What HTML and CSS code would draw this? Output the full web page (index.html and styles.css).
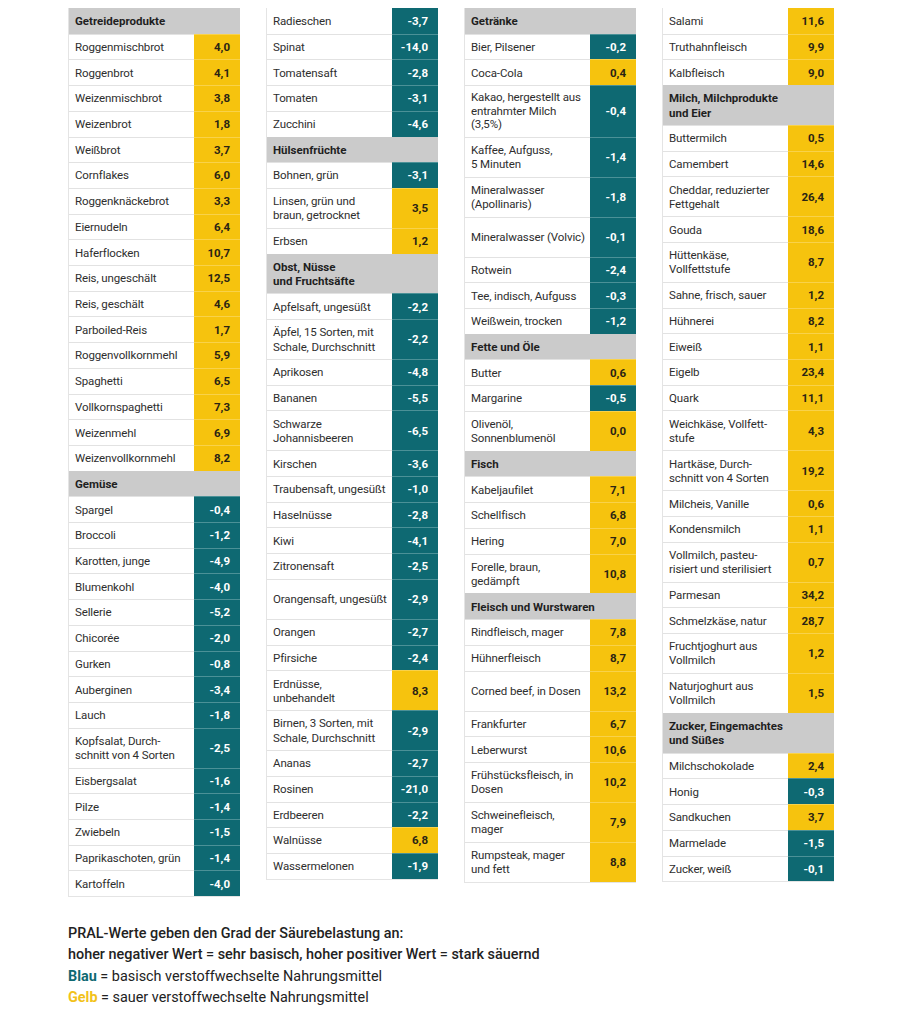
FILE: index.html
```html
<!DOCTYPE html>
<html lang="de">
<head>
<meta charset="utf-8">
<title>PRAL-Werte</title>
<link rel="stylesheet" href="styles.css">
</head>
<body>
<div class="grid">
  <div class="col">
    <div class="row hd"><div class="n">Getreideprodukte</div></div>
    <div class="row"><div class="n">Roggenmischbrot</div><div class="v y">4,0</div></div>
    <div class="row"><div class="n">Roggenbrot</div><div class="v y">4,1</div></div>
    <div class="row"><div class="n">Weizenmischbrot</div><div class="v y">3,8</div></div>
    <div class="row"><div class="n">Weizenbrot</div><div class="v y">1,8</div></div>
    <div class="row"><div class="n">Weißbrot</div><div class="v y">3,7</div></div>
    <div class="row"><div class="n">Cornflakes</div><div class="v y">6,0</div></div>
    <div class="row"><div class="n">Roggenknäckebrot</div><div class="v y">3,3</div></div>
    <div class="row"><div class="n">Eiernudeln</div><div class="v y">6,4</div></div>
    <div class="row"><div class="n">Haferflocken</div><div class="v y">10,7</div></div>
    <div class="row"><div class="n">Reis, ungeschält</div><div class="v y">12,5</div></div>
    <div class="row"><div class="n">Reis, geschält</div><div class="v y">4,6</div></div>
    <div class="row"><div class="n">Parboiled-Reis</div><div class="v y">1,7</div></div>
    <div class="row"><div class="n">Roggenvollkornmehl</div><div class="v y">5,9</div></div>
    <div class="row"><div class="n">Spaghetti</div><div class="v y">6,5</div></div>
    <div class="row"><div class="n">Vollkornspaghetti</div><div class="v y">7,3</div></div>
    <div class="row"><div class="n">Weizenmehl</div><div class="v y">6,9</div></div>
    <div class="row"><div class="n">Weizenvollkornmehl</div><div class="v y">8,2</div></div>
    <div class="row hd"><div class="n">Gemüse</div></div>
    <div class="row"><div class="n">Spargel</div><div class="v b">-0,4</div></div>
    <div class="row"><div class="n">Broccoli</div><div class="v b">-1,2</div></div>
    <div class="row"><div class="n">Karotten, junge</div><div class="v b">-4,9</div></div>
    <div class="row"><div class="n">Blumenkohl</div><div class="v b">-4,0</div></div>
    <div class="row"><div class="n">Sellerie</div><div class="v b">-5,2</div></div>
    <div class="row"><div class="n">Chicorée</div><div class="v b">-2,0</div></div>
    <div class="row"><div class="n">Gurken</div><div class="v b">-0,8</div></div>
    <div class="row"><div class="n">Auberginen</div><div class="v b">-3,4</div></div>
    <div class="row"><div class="n">Lauch</div><div class="v b">-1,8</div></div>
    <div class="row"><div class="n">Kopfsalat, Durch-<br>schnitt von 4 Sorten</div><div class="v b">-2,5</div></div>
    <div class="row"><div class="n">Eisbergsalat</div><div class="v b">-1,6</div></div>
    <div class="row"><div class="n">Pilze</div><div class="v b">-1,4</div></div>
    <div class="row"><div class="n">Zwiebeln</div><div class="v b">-1,5</div></div>
    <div class="row"><div class="n">Paprikaschoten, grün</div><div class="v b">-1,4</div></div>
    <div class="row"><div class="n">Kartoffeln</div><div class="v b">-4,0</div></div>
  </div>

  <div class="col">
    <div class="row"><div class="n">Radieschen</div><div class="v b">-3,7</div></div>
    <div class="row"><div class="n">Spinat</div><div class="v b">-14,0</div></div>
    <div class="row"><div class="n">Tomatensaft</div><div class="v b">-2,8</div></div>
    <div class="row"><div class="n">Tomaten</div><div class="v b">-3,1</div></div>
    <div class="row"><div class="n">Zucchini</div><div class="v b">-4,6</div></div>
    <div class="row hd"><div class="n">Hülsenfrüchte</div></div>
    <div class="row"><div class="n">Bohnen, grün</div><div class="v b">-3,1</div></div>
    <div class="row"><div class="n">Linsen, grün und<br>braun, getrocknet</div><div class="v y">3,5</div></div>
    <div class="row"><div class="n">Erbsen</div><div class="v y">1,2</div></div>
    <div class="row hd"><div class="n">Obst, Nüsse<br>und Fruchtsäfte</div></div>
    <div class="row"><div class="n">Apfelsaft, ungesüßt</div><div class="v b">-2,2</div></div>
    <div class="row"><div class="n">Äpfel, 15 Sorten, mit<br>Schale, Durchschnitt</div><div class="v b">-2,2</div></div>
    <div class="row"><div class="n">Aprikosen</div><div class="v b">-4,8</div></div>
    <div class="row"><div class="n">Bananen</div><div class="v b">-5,5</div></div>
    <div class="row"><div class="n">Schwarze<br>Johannisbeeren</div><div class="v b">-6,5</div></div>
    <div class="row"><div class="n">Kirschen</div><div class="v b">-3,6</div></div>
    <div class="row"><div class="n">Traubensaft, ungesüßt</div><div class="v b">-1,0</div></div>
    <div class="row"><div class="n">Haselnüsse</div><div class="v b">-2,8</div></div>
    <div class="row"><div class="n">Kiwi</div><div class="v b">-4,1</div></div>
    <div class="row"><div class="n">Zitronensaft</div><div class="v b">-2,5</div></div>
    <div class="row tall"><div class="n">Orangensaft, ungesüßt</div><div class="v b">-2,9</div></div>
    <div class="row"><div class="n">Orangen</div><div class="v b">-2,7</div></div>
    <div class="row"><div class="n">Pfirsiche</div><div class="v b">-2,4</div></div>
    <div class="row"><div class="n">Erdnüsse,<br>unbehandelt</div><div class="v y">8,3</div></div>
    <div class="row"><div class="n">Birnen, 3 Sorten, mit<br>Schale, Durchschnitt</div><div class="v b">-2,9</div></div>
    <div class="row"><div class="n">Ananas</div><div class="v b">-2,7</div></div>
    <div class="row"><div class="n">Rosinen</div><div class="v b">-21,0</div></div>
    <div class="row"><div class="n">Erdbeeren</div><div class="v b">-2,2</div></div>
    <div class="row"><div class="n">Walnüsse</div><div class="v y">6,8</div></div>
    <div class="row"><div class="n">Wassermelonen</div><div class="v b">-1,9</div></div>
  </div>

  <div class="col">
    <div class="row hd"><div class="n">Getränke</div></div>
    <div class="row"><div class="n">Bier, Pilsener</div><div class="v b">-0,2</div></div>
    <div class="row"><div class="n">Coca-Cola</div><div class="v y">0,4</div></div>
    <div class="row tri"><div class="n">Kakao, hergestellt aus<br>entrahmter Milch<br>(3,5%)</div><div class="v b">-0,4</div></div>
    <div class="row"><div class="n">Kaffee, Aufguss,<br>5 Minuten</div><div class="v b">-1,4</div></div>
    <div class="row"><div class="n">Mineralwasser<br>(Apollinaris)</div><div class="v b">-1,8</div></div>
    <div class="row tall"><div class="n">Mineralwasser (Volvic)</div><div class="v b">-0,1</div></div>
    <div class="row"><div class="n">Rotwein</div><div class="v b">-2,4</div></div>
    <div class="row"><div class="n">Tee, indisch, Aufguss</div><div class="v b">-0,3</div></div>
    <div class="row"><div class="n">Weißwein, trocken</div><div class="v b">-1,2</div></div>
    <div class="row hd"><div class="n">Fette und Öle</div></div>
    <div class="row"><div class="n">Butter</div><div class="v y">0,6</div></div>
    <div class="row"><div class="n">Margarine</div><div class="v b">-0,5</div></div>
    <div class="row"><div class="n">Olivenöl,<br>Sonnenblumenöl</div><div class="v y">0,0</div></div>
    <div class="row hd"><div class="n">Fisch</div></div>
    <div class="row"><div class="n">Kabeljaufilet</div><div class="v y">7,1</div></div>
    <div class="row"><div class="n">Schellfisch</div><div class="v y">6,8</div></div>
    <div class="row"><div class="n">Hering</div><div class="v y">7,0</div></div>
    <div class="row"><div class="n">Forelle, braun,<br>gedämpft</div><div class="v y">10,8</div></div>
    <div class="row hd"><div class="n">Fleisch und Wurstwaren</div></div>
    <div class="row"><div class="n">Rindfleisch, mager</div><div class="v y">7,8</div></div>
    <div class="row"><div class="n">Hühnerfleisch</div><div class="v y">8,7</div></div>
    <div class="row tall"><div class="n">Corned beef, in Dosen</div><div class="v y">13,2</div></div>
    <div class="row"><div class="n">Frankfurter</div><div class="v y">6,7</div></div>
    <div class="row"><div class="n">Leberwurst</div><div class="v y">10,6</div></div>
    <div class="row"><div class="n">Frühstücksfleisch, in<br>Dosen</div><div class="v y">10,2</div></div>
    <div class="row"><div class="n">Schweinefleisch,<br>mager</div><div class="v y">7,9</div></div>
    <div class="row"><div class="n">Rumpsteak, mager<br>und fett</div><div class="v y">8,8</div></div>
  </div>

  <div class="col">
    <div class="row"><div class="n">Salami</div><div class="v y">11,6</div></div>
    <div class="row"><div class="n">Truthahnfleisch</div><div class="v y">9,9</div></div>
    <div class="row"><div class="n">Kalbfleisch</div><div class="v y">9,0</div></div>
    <div class="row hd"><div class="n">Milch, Milchprodukte<br>und Eier</div></div>
    <div class="row"><div class="n">Buttermilch</div><div class="v y">0,5</div></div>
    <div class="row"><div class="n">Camembert</div><div class="v y">14,6</div></div>
    <div class="row"><div class="n">Cheddar, reduzierter<br>Fettgehalt</div><div class="v y">26,4</div></div>
    <div class="row"><div class="n">Gouda</div><div class="v y">18,6</div></div>
    <div class="row"><div class="n">Hüttenkäse,<br>Vollfettstufe</div><div class="v y">8,7</div></div>
    <div class="row"><div class="n">Sahne, frisch, sauer</div><div class="v y">1,2</div></div>
    <div class="row"><div class="n">Hühnerei</div><div class="v y">8,2</div></div>
    <div class="row"><div class="n">Eiweiß</div><div class="v y">1,1</div></div>
    <div class="row"><div class="n">Eigelb</div><div class="v y">23,4</div></div>
    <div class="row"><div class="n">Quark</div><div class="v y">11,1</div></div>
    <div class="row"><div class="n">Weichkäse, Vollfett-<br>stufe</div><div class="v y">4,3</div></div>
    <div class="row"><div class="n">Hartkäse, Durch-<br>schnitt von 4 Sorten</div><div class="v y">19,2</div></div>
    <div class="row"><div class="n">Milcheis, Vanille</div><div class="v y">0,6</div></div>
    <div class="row"><div class="n">Kondensmilch</div><div class="v y">1,1</div></div>
    <div class="row"><div class="n">Vollmilch, pasteu-<br>risiert und sterilisiert</div><div class="v y">0,7</div></div>
    <div class="row"><div class="n">Parmesan</div><div class="v y">34,2</div></div>
    <div class="row"><div class="n">Schmelzkäse, natur</div><div class="v y">28,7</div></div>
    <div class="row"><div class="n">Fruchtjoghurt aus<br>Vollmilch</div><div class="v y">1,2</div></div>
    <div class="row"><div class="n">Naturjoghurt aus<br>Vollmilch</div><div class="v y">1,5</div></div>
    <div class="row hd"><div class="n">Zucker, Eingemachtes<br>und Süßes</div></div>
    <div class="row"><div class="n">Milchschokolade</div><div class="v y">2,4</div></div>
    <div class="row"><div class="n">Honig</div><div class="v b">-0,3</div></div>
    <div class="row"><div class="n">Sandkuchen</div><div class="v y">3,7</div></div>
    <div class="row"><div class="n">Marmelade</div><div class="v b">-1,5</div></div>
    <div class="row"><div class="n">Zucker, weiß</div><div class="v b">-0,1</div></div>
  </div>
</div>

<div class="legend">
  <p class="strong">PRAL-Werte geben den Grad der Säurebelastung an:</p>
  <p class="strong">hoher negativer Wert = sehr basisch, hoher positiver Wert = stark säuernd</p>
  <p><span class="blau">Blau</span> = basisch verstoffwechselte Nahrungsmittel</p>
  <p><span class="gelb">Gelb</span> = sauer verstoffwechselte Nahrungsmittel</p>
</div>
</body>
</html>
```

FILE: styles.css
```css
html, body {
  margin: 0;
  padding: 0;
  background: #ffffff;
}

body {
  font-family: Roboto, "Liberation Sans", Arial, sans-serif;
  color: #333333;
  padding: 8px 0 0 68px;
}

.grid {
  display: grid;
  grid-template-columns: repeat(4, 172px);
  column-gap: 26px;
  align-items: start;
}

.col {
  display: flex;
  flex-direction: column;
  border-left: 1px solid #e4e4e4;
  border-bottom: 1px solid #e4e4e4;
}

.row {
  display: flex;
  align-items: stretch;
  font-size: 11.5px;
  line-height: 14.2px;
}

.row.tall {
  min-height: 40px;
}

.row.tri {
  line-height: 13.4px;
}

.n {
  flex: 1;
  min-width: 0;
  display: flex;
  align-items: center;
  padding: 5.25px 4px 5.25px 6px;
  border-top: 1px solid #e2e2e2;
  color: #2e2e2e;
  white-space: nowrap;
  letter-spacing: -0.12px;
}

.col > .row:first-child .n,
.col > .row:first-child .v {
  border-top-color: transparent;
}

.v {
  width: 46px;
  flex: none;
  display: flex;
  align-items: center;
  justify-content: flex-end;
  padding: 0 10px 0 0;
  box-sizing: border-box;
  font-weight: 700;
  border-top: 1px solid;
}

.v.y {
  background: #f6c30e;
  color: #2a2414;
  border-top-color: #f9d24a;
}

.v.b {
  background: #0e6972;
  color: #ffffff;
  border-top-color: #4b9197;
}

.hd {
  background: #cbcbcb;
}

.hd .n {
  font-weight: 700;
  color: #1f1f1f;
  border-top-color: #cbcbcb;
  letter-spacing: 0;
}

.legend {
  margin-top: 26px;
  font-size: 14.4px;
  line-height: 21.3px;
  color: #222222;
}

.legend p {
  margin: 0;
}

.legend .strong {
  font-weight: 500;
}

.blau {
  color: #0e6972;
  font-weight: 700;
}

.gelb {
  color: #f2c21a;
  font-weight: 700;
}
```
